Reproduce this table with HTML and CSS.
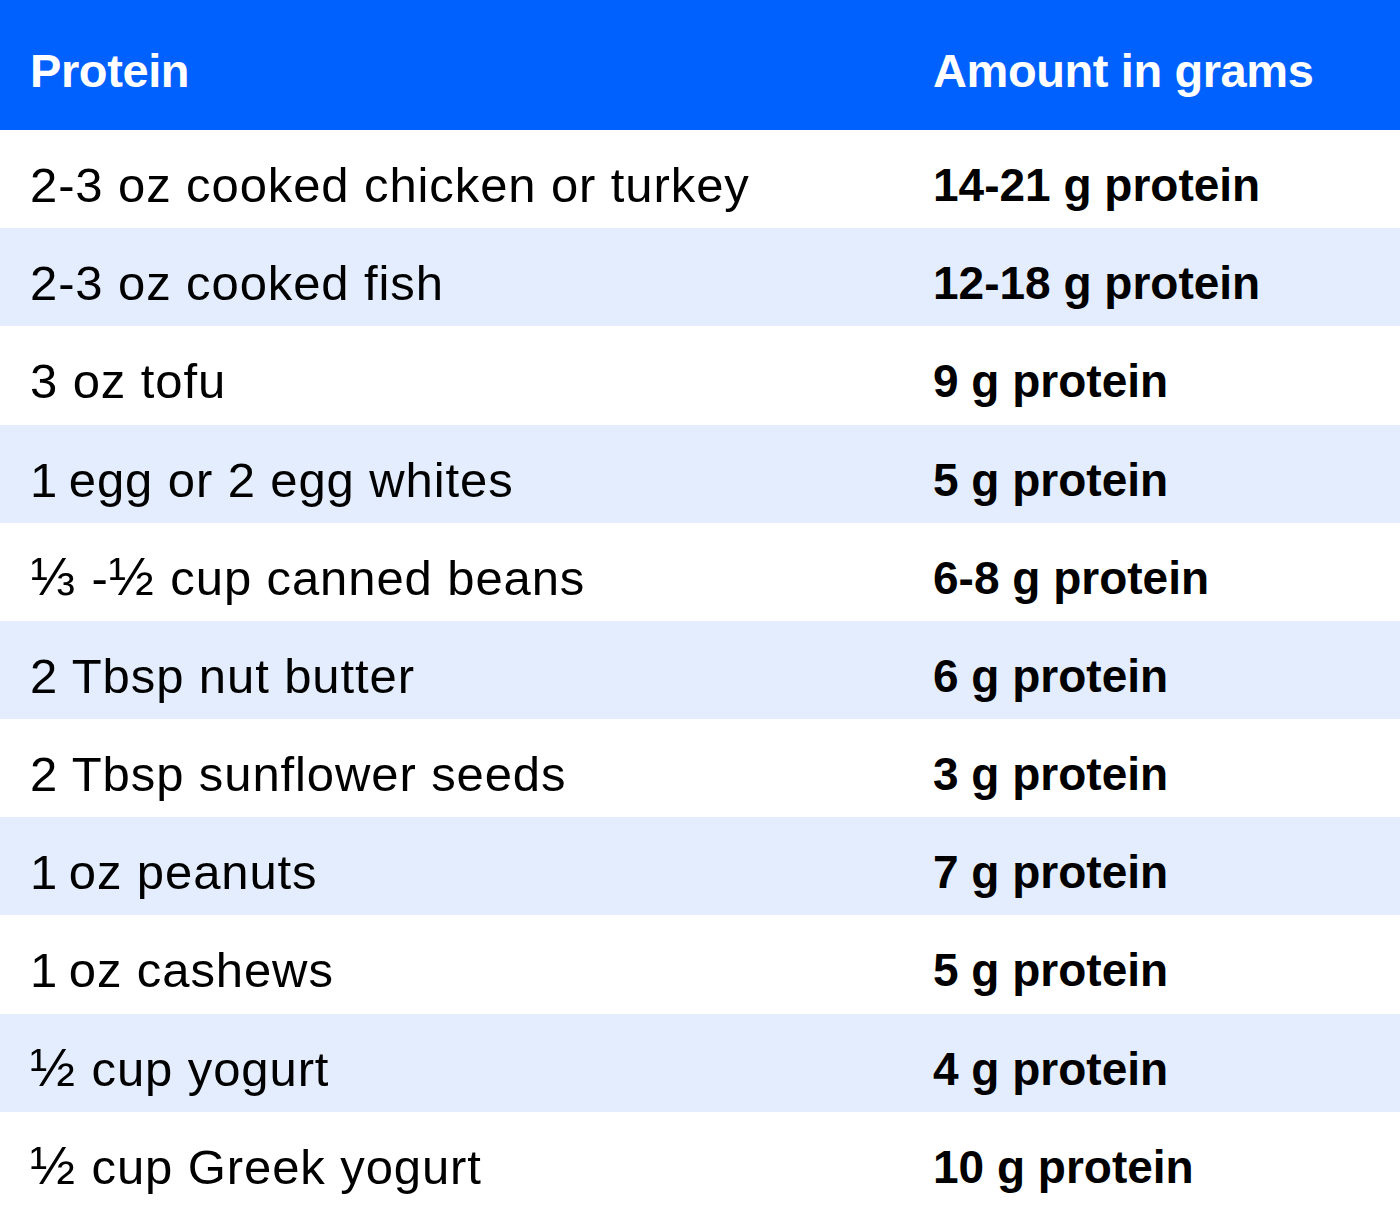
FILE: index.html
```html
<!DOCTYPE html>
<html lang="en">
<head>
<meta charset="utf-8">
<title>Protein amounts</title>
<link rel="stylesheet" href="styles.css">
</head>
<body>
<div class="table">
  <div class="row head">
    <div class="cell">Protein</div>
    <div class="cell">Amount in grams</div>
  </div>
  <div class="row">
    <div class="cell food">2-3 oz cooked chicken or turkey</div>
    <div class="cell amt">14-21 g protein</div>
  </div>
  <div class="row alt">
    <div class="cell food">2-3 oz cooked fish</div>
    <div class="cell amt">12-18 g protein</div>
  </div>
  <div class="row">
    <div class="cell food">3 oz tofu</div>
    <div class="cell amt">9 g protein</div>
  </div>
  <div class="row alt">
    <div class="cell food"><span class="one">1</span> egg or 2 egg whites</div>
    <div class="cell amt">5 g protein</div>
  </div>
  <div class="row">
    <div class="cell food"><span class="frac">⅓</span> -<span class="frac">½</span> cup canned beans</div>
    <div class="cell amt">6-8 g protein</div>
  </div>
  <div class="row alt">
    <div class="cell food">2 Tbsp nut butter</div>
    <div class="cell amt">6 g protein</div>
  </div>
  <div class="row">
    <div class="cell food">2 Tbsp sunflower seeds</div>
    <div class="cell amt">3 g protein</div>
  </div>
  <div class="row alt">
    <div class="cell food"><span class="one">1</span> oz peanuts</div>
    <div class="cell amt">7 g protein</div>
  </div>
  <div class="row">
    <div class="cell food"><span class="one">1</span> oz cashews</div>
    <div class="cell amt">5 g protein</div>
  </div>
  <div class="row alt">
    <div class="cell food"><span class="frac">½</span> cup yogurt</div>
    <div class="cell amt">4 g protein</div>
  </div>
  <div class="row">
    <div class="cell food"><span class="frac">½</span> cup Greek yogurt</div>
    <div class="cell amt">10 g protein</div>
  </div>
</div>
</body>
</html>
```

FILE: styles.css
```css
html, body {
  margin: 0;
  padding: 0;
  background: #ffffff;
}

body {
  font-family: "Liberation Sans", Arial, "DejaVu Sans", sans-serif;
  color: #000000;
}

.table {
  width: 1400px;
  height: 1210px;
  display: grid;
  grid-template-rows: 130px repeat(11, 1fr);
}

.row {
  display: grid;
  grid-template-columns: 903px 1fr;
  background: #ffffff;
}

.row.alt {
  background: #e3edfd;
}

.row.head {
  background: #0061fe;
  color: #ffffff;
}

.cell {
  line-height: 1;
  white-space: nowrap;
}

.row .cell:first-child {
  padding-left: 30px;
}

.row .cell:last-child {
  padding-left: 30px;
}

.head .cell {
  font-weight: 700;
  font-size: 47px;
  letter-spacing: -0.4px;
  padding-top: 47px;
}

.food {
  font-size: 49px;
  letter-spacing: 0.9px;
  padding-top: 31px;
}

.frac {
  font-size: 54px;
  line-height: 0;
  letter-spacing: 2px;
}

.one {
  letter-spacing: -3px;
}

.amt {
  font-weight: 700;
  font-size: 46px;
  padding-top: 32px;
}
```
